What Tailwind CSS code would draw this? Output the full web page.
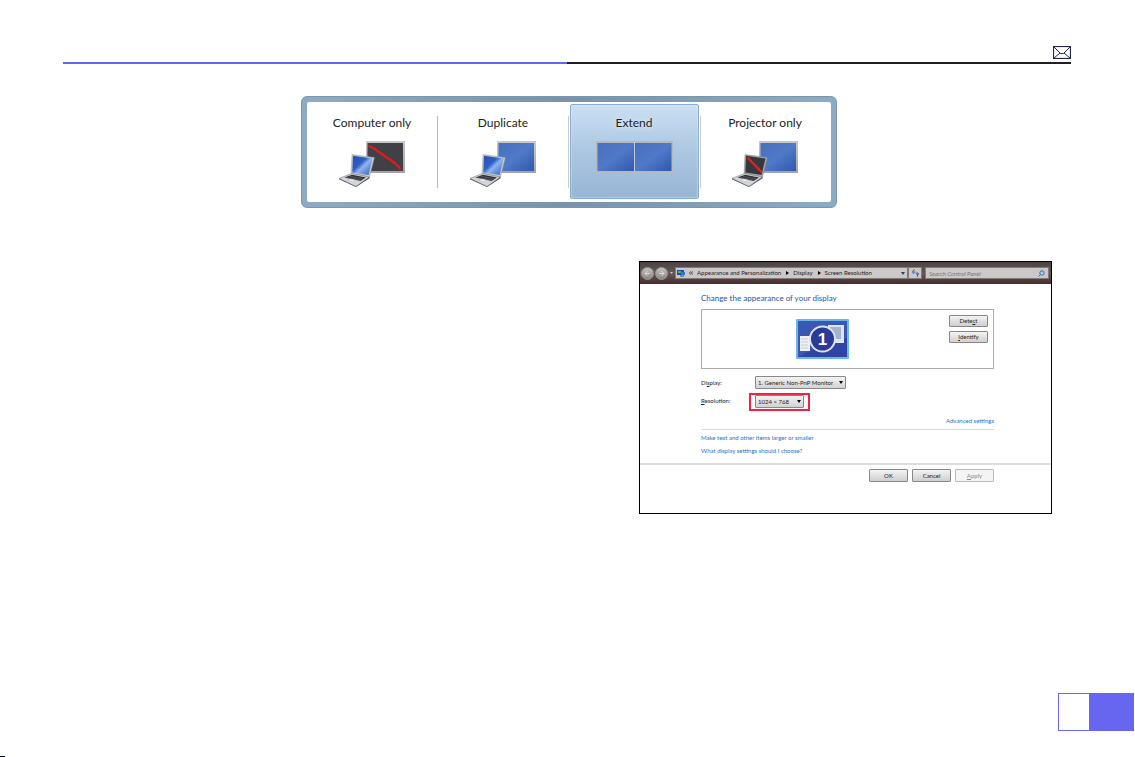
<!DOCTYPE html>
<html lang="en">
<head>
  <meta charset="UTF-8" />
  <meta name="viewport" content="width=device-width, initial-scale=1.0" />
  <title>Display settings</title>
  <script src="https://cdn.jsdelivr.net/npm/@tailwindcss/browser@4"></script>
</head>
<body class="bg-white font-['Lato','Open_Sans',sans-serif] text-black">
  <!-- Shared icon parts -->
  <svg class="absolute size-0">
    <defs>
      <linearGradient id="blue" x1="0" y1="0" x2="1" y2="1">
        <stop offset="0" stop-color="#4670bd" />
        <stop offset=".5" stop-color="#5079c8" />
        <stop offset="1" stop-color="#2f58b0" />
      </linearGradient>
      <linearGradient id="lid" x1="0" y1="0" x2="1" y2="1">
        <stop offset="0" stop-color="#2450b0" />
        <stop offset=".4" stop-color="#2f5fc4" />
        <stop offset=".55" stop-color="#8fb4ee" />
        <stop offset="1" stop-color="#2c58b8" />
      </linearGradient>
      <linearGradient id="frame" x1="0" y1="0" x2="0" y2="1">
        <stop offset="0" stop-color="#c9c9cb" />
        <stop offset="1" stop-color="#a3a4a8" />
      </linearGradient>
      <symbol id="base" viewBox="0 0 66 46">
        <path d="M0 37.5 12.5 32.5 30.5 36 17 45.5Z" fill="#d3d5d9" stroke="#77797f" stroke-width=".6" />
        <path d="M5.5 36.5 13 33.7 27 36.6 21.5 39.9Z" fill="#303238" />
        <path d="m8 36.6 14 2.4M11 35.4l13 2.3" stroke="#8a8c92" stroke-width=".4" />
        <path d="m8.5 39.2 3-1.3 5 1.1-2.8 1.6Z" fill="#f3f4f6" stroke="#999" stroke-width=".3" />
        <path d="M0 37.5 17 45.5 30.5 36v1.2L17 46 0 38.3Z" fill="#42444a" />
      </symbol>
    </defs>
  </svg>

  <main class="flex min-h-screen flex-col">
    <!-- Header -->
    <header class="mr-16 ml-[63px] pt-[46px]">
      <a href="#contact" aria-label="Contact" class="mb-[3px] block">
        <svg class="ml-auto h-[13px] w-[18px]" viewBox="0 0 18 13" fill="none" stroke="#252746">
          <rect x=".5" y=".5" width="17" height="12" stroke-width="1.2" />
          <path d="M1 1 7.5 7.5h3L17 1M1 12l6-5M17 12l-6-5" />
        </svg>
      </a>
      <div class="flex h-[2px]">
        <div class="w-1/2 bg-[#6666f0]"></div>
        <div class="w-1/2 bg-[#231f20]"></div>
      </div>
    </header>

    <!-- Projector modes -->
    <div class="mt-8 flex justify-center pl-[2px]">
      <section class="rounded-md border border-[#7b95aa] bg-linear-to-r from-[#8eabc3] via-[#7893ab] to-[#8cabc5] p-[5px]">
        <div class="grid h-[100px] w-[524px] grid-cols-4 rounded-xs bg-white text-[12px] leading-4 text-[#222]">
          <button class="relative flex flex-col items-center pt-[13px]">
            <span class="mb-[10px]">Computer only</span>
            <svg class="h-[46px] w-[66px]" viewBox="0 0 66 46">
              <rect x="27" width="39" height="32" fill="url(#frame)" />
              <rect x="28.5" y="2" width="35.5" height="28" fill="#3f4146" />
              <path d="M30.5 5c8 4 12 8 18 12 5 3 9 6 12.5 10.5" fill="none" stroke="#e6181c" stroke-width="2.2" stroke-linecap="round" />
              <path d="M13 13.5 35.5 16.5 30.5 36 12 32.5Z" fill="#c6c8cc" stroke="#888" stroke-width=".4" />
              <path d="M14 14.7 33.5 17.5 29.5 34 13.3 31.5Z" fill="url(#lid)" />
              <use href="#base" width="66" height="46" />
            </svg>
            <span class="absolute top-[14px] right-0 h-[72px] w-px bg-[#bbb]"></span>
          </button>
          <button class="relative flex flex-col items-center pt-[13px]">
            <span class="mb-[10px]">Duplicate</span>
            <svg class="h-[46px] w-[66px]" viewBox="0 0 66 46">
              <rect x="27" width="39" height="32" fill="url(#frame)" />
              <rect x="28.5" y="2" width="35.5" height="28" fill="url(#blue)" />
              <path d="M13 13.5 35.5 16.5 30.5 36 12 32.5Z" fill="#c6c8cc" stroke="#888" stroke-width=".4" />
              <path d="M14 14.7 33.5 17.5 29.5 34 13.3 31.5Z" fill="url(#lid)" />
              <use href="#base" width="66" height="46" />
            </svg>
            <span class="absolute top-[14px] right-0 h-[72px] w-px bg-[#ccc]"></span>
          </button>
          <button class="mx-px mt-[2px] mb-[3px] flex flex-col items-center rounded-xs border border-[#8aaed0] bg-linear-to-b from-[#cbdff3] via-[#abc7e2] to-[#98b5d4] pt-[10px] inset-shadow-[0_0_2px_#e4f0fc]">
            <span class="mb-[10px] text-shadow-[0_0_6px_#fff]">Extend</span>
            <svg class="h-8 w-[77px]" viewBox="0 0 77 32">
              <rect width="77" height="32" fill="#b5b8bd" />
              <rect x="1.5" y="2" width="36.5" height="28" fill="url(#blue)" />
              <rect x="39" y="2" width="36.5" height="28" fill="url(#blue)" />
              <path d="M38.5 1v30" stroke="#c4cad4" />
            </svg>
          </button>
          <button class="relative flex flex-col items-center pt-[13px]">
            <span class="mb-[10px]">Projector only</span>
            <svg class="h-[46px] w-[66px]" viewBox="0 0 66 46">
              <rect x="27" width="39" height="32" fill="url(#frame)" />
              <rect x="28.5" y="2" width="35.5" height="28" fill="url(#blue)" />
              <path d="M13 13.5 35.5 16.5 30.5 36 12 32.5Z" fill="#a9abb0" stroke="#777" stroke-width=".4" />
              <path d="M14 14.7 33.5 17.5 29.5 34 13.3 31.5Z" fill="#36383d" />
              <path d="M15.5 16.5 30 31.5" stroke="#ee1b1f" stroke-width="2.4" />
              <use href="#base" width="66" height="46" />
            </svg>
            <span class="absolute top-[14px] left-0 h-[72px] w-px bg-[#ccc]"></span>
          </button>
        </div>
      </section>
    </div>

    <!-- Screen resolution window -->
    <section class="mt-[53px] mr-[83px] ml-auto w-[413px] border border-black pb-[31px] text-[6px] leading-[12px] text-[#222]">
      <div class="flex h-[22px] items-center bg-linear-to-b from-[#4a4242] via-[#655a5a] to-[#482c2b] pr-[2px] pl-px">
        <button aria-label="Back" class="flex size-[13px] items-center justify-center rounded-full border border-[#999] bg-linear-to-b from-[#c5c2c2] to-[#898585]">
          <svg class="size-[7px]" viewBox="0 0 7 7" fill="none" stroke="#ddd"><path d="M6 3.5H1M3.5 1 1 3.5 3.5 6" /></svg>
        </button>
        <button aria-label="Forward" class="ml-px flex size-[13px] items-center justify-center rounded-full border border-[#999] bg-linear-to-b from-[#c5c2c2] to-[#898585]">
          <svg class="size-[7px]" viewBox="0 0 7 7" fill="none" stroke="#ddd"><path d="M1 3.5H6M3.5 1 6 3.5 3.5 6" /></svg>
        </button>
        <svg class="mx-px h-1 w-[5px]" viewBox="0 0 5 4"><path d="M1 1h3L2.5 3Z" fill="#ccc" /></svg>
        <nav class="flex h-3 w-[233px] items-center gap-1 border border-[#817a7a] bg-[#cdc8c8] px-px">
          <svg class="size-2" viewBox="0 0 8 8"><rect y="1" width="7" height="5" fill="#1b4fa8" /><path d="M1 2h3v2H1Z" fill="#58b05b" /><path d="M4 3h4v3H4Z" fill="#2c76d2" /><path d="M3 7h4" stroke="#345" /></svg>
          <svg class="size-1" viewBox="0 0 5 5" fill="none" stroke="#222"><path d="M2.2.5.7 2.500l1.500 2M4.700.5 3.200 2.500l1.500 2" /></svg>
          <a href="#personalization">Appearance and Personalization</a>
          <svg class="size-1" viewBox="0 0 4 4"><path d="M1 0v4l3-2Z" /></svg>
          <a href="#display">Display</a>
          <svg class="size-1" viewBox="0 0 4 4"><path d="M1 0v4l3-2Z" /></svg>
          <a href="#resolution">Screen Resolution</a>
          <svg class="mr-px ml-auto h-1 w-1" viewBox="0 0 4 4"><path d="M0 1h4L2 4Z" fill="#245" /></svg>
        </nav>
        <button aria-label="Refresh" class="flex h-3 w-[14px] items-center justify-center border border-[#817a7a] bg-[#cdc8c8]">
          <svg class="size-2" viewBox="0 0 8 8" fill="none" stroke="#2a6fc4"><path d="M3.5 0 1.5 3h3M1.5 3 3 5M6.5 8V5L8 5M6.5 3 5 5h3" /></svg>
        </button>
        <form class="ml-[3px] flex h-3 flex-1 items-center border border-[#817a7a] bg-[#cdc8c8] px-[3px]">
          <input type="text" aria-label="Search Control Panel" placeholder="Search Control Panel" class="h-full min-w-0 flex-1 italic outline-none placeholder:text-[#777]" />
          <svg class="size-[7px]" viewBox="0 0 7 7" fill="none" stroke="#2a6fc4"><circle cx="4" cy="3" r="2.2" /><path d="M2.5 4.5 .5 6.5" /></svg>
        </form>
      </div>

      <div class="mr-[57px] ml-[61px]">
        <h1 class="pt-2 text-[8px] leading-[12px] text-[#1f54ab]">Change the appearance of your display</h1>

        <!-- Monitor preview -->
        <div class="mt-[5px] flex h-[60px] border border-[#aaa] pr-[5px] pl-[94px]">
          <svg class="mt-[9px] h-10 w-[53px]" viewBox="0 0 53 40">
            <rect width="53" height="40" rx="1" fill="#6ab7ee" />
            <rect x="2" y="2" width="49" height="36" fill="#3045a2" />
            <path d="M2 2h49v17C34 22 18 30 2 38Z" fill="#3a57b4" />
            <rect x="32" y="6" width="16" height="18" fill="#dfe5ee" />
            <rect x="34" y="8" width="11" height="12" fill="#a3b2cd" />
            <rect x="4" y="17" width="10" height="15" fill="#eef0f3" />
            <path d="M5 20h7M5 23h7M5 26h7M5 29h7" stroke="#b7bbc5" stroke-width=".7" />
            <circle cx="26.5" cy="20" r="12.5" fill="#2a3a98" stroke="#dde3ee" stroke-width="2" />
            <text x="26.5" y="26" text-anchor="middle" font-family="Liberation Sans, sans-serif" font-size="17" font-weight="700" fill="#fff">1</text>
          </svg>
          <div class="mt-[5px] ml-auto flex flex-col gap-1">
            <button class="h-3 w-[39px] rounded-[1px] border border-[#888] bg-linear-to-b from-[#f3f3f3] to-[#cfcfcf] leading-[10px]">Dete<u>c</u>t</button>
            <button class="h-3 w-[39px] rounded-[1px] border border-[#888] bg-linear-to-b from-[#f3f3f3] to-[#cfcfcf] leading-[10px]"><u>I</u>dentify</button>
          </div>
        </div>

        <!-- Settings -->
        <div class="mt-[7px] flex items-center">
          <label for="display" class="w-[54px]">Di<u>s</u>play:</label>
          <div class="relative">
            <select id="display" class="block h-[13px] w-[91px] appearance-none rounded-[1px] border border-[#888] bg-linear-to-b from-[#f3f3f3] to-[#d3d3d3] pl-[2px] leading-[11px]">
              <option>1. Generic Non-PnP Monitor</option>
            </select>
            <svg class="pointer-events-none absolute top-[5px] right-[3px] h-[3px] w-1" viewBox="0 0 4 3"><path d="M0 0h4L2 3Z" /></svg>
          </div>
        </div>
        <div class="mt-1 flex items-start">
          <label for="resolution" class="w-12 pt-[2px]"><u>R</u>esolution:</label>
          <div class="relative h-[18px] w-[61px] border-2 border-[#ee2442] pl-1">
            <select id="resolution" class="block h-[13px] w-[49px] appearance-none rounded-[1px] border border-[#888] bg-linear-to-b from-[#f3f3f3] to-[#d3d3d3] pl-[2px] leading-[11px]">
              <option>1024 × 768</option>
            </select>
            <svg class="pointer-events-none absolute top-[5px] right-[7px] h-[3px] w-1" viewBox="0 0 4 3"><path d="M0 0h4L2 3Z" /></svg>
          </div>
        </div>
        <div class="mt-1 border-b border-[#d8d8d8] pb-[2px] text-right">
          <a href="#advanced" class="text-[#1f6fc6]">Advanced settings</a>
        </div>
        <ul class="mt-[2px] space-y-px text-[#1f6fc6]">
          <li><a href="#larger">Make text and other items larger or smaller</a></li>
          <li><a href="#choose">What display settings should I choose?</a></li>
        </ul>
      </div>

      <div class="mt-[6px] flex justify-end gap-1 border-t-2 border-[#ddd] pt-1 pr-[57px]">
        <button class="h-[13px] w-[39px] rounded-[1px] border border-[#888] bg-linear-to-b from-[#f3f3f3] to-[#cfcfcf] leading-[11px]">OK</button>
        <button class="h-[13px] w-[39px] rounded-[1px] border border-[#888] bg-linear-to-b from-[#f3f3f3] to-[#cfcfcf] leading-[11px]">Cancel</button>
        <button disabled class="h-[13px] w-[39px] rounded-[1px] border border-[#bbb] bg-[#f4f4f4] leading-[11px] text-[#888]"><u>A</u>pply</button>
      </div>
    </section>

    <!-- Page tab -->
    <footer class="relative mt-auto pb-[26px]">
      <div class="mr-px ml-auto flex h-[38px] w-[76px] border border-[#6666f0]">
        <div class="w-[30px] bg-white"></div>
        <div class="flex-1 bg-[#6666f0]"></div>
      </div>
      <span class="absolute bottom-0 left-0 h-px w-[5px] bg-[#000030]"></span>
    </footer>
  </main>
</body>
</html>
